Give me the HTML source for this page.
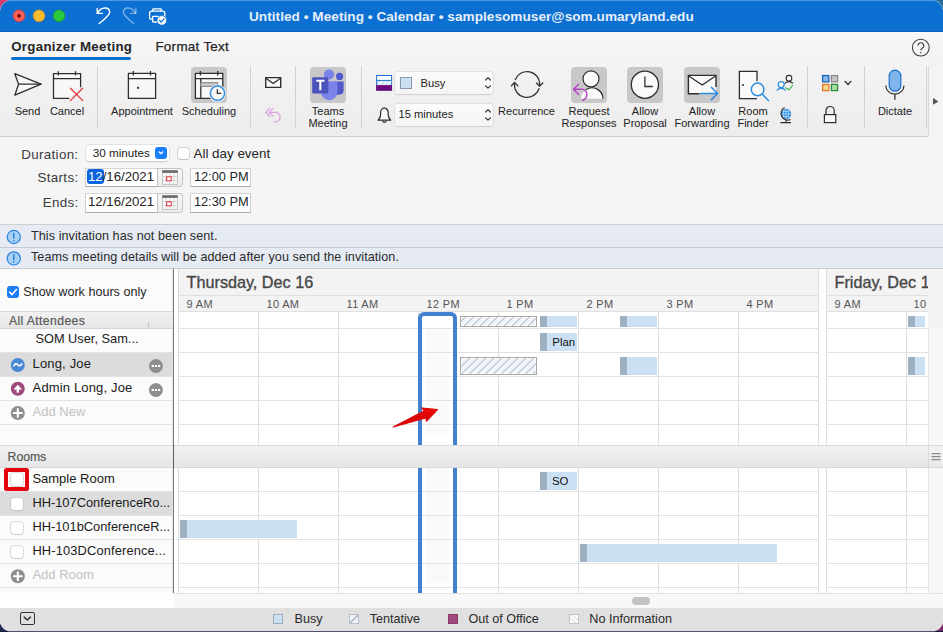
<!DOCTYPE html>
<html><head><meta charset="utf-8">
<style>
*{margin:0;padding:0;box-sizing:border-box}
html,body{width:943px;height:632px;overflow:hidden}
body{position:relative;font-family:"Liberation Sans",sans-serif;background:#1d2450;color:#222}
.a{position:absolute}
.t{position:absolute;white-space:nowrap;line-height:1}
#win{position:absolute;left:0;top:0;width:943px;height:631px;border-radius:12px 12px 11px 11px;box-shadow:0 0 0 0.5px rgba(255,255,255,0.5);overflow:hidden;background:#f5f5f5}
#title{left:0;top:0;width:943px;height:32px;z-index:1;background:#0c70d3;border-bottom:1px solid #0a5fb8}
.tl{position:absolute;width:12px;height:12px;border-radius:50%;top:10px}
/* toolbar */
#tb{left:0;top:31px;width:943px;height:106px;background:linear-gradient(#f7f7f7,#f2f2f2 40%,#ededed);border-bottom:1px solid #cdcdcd;box-shadow:inset 0 2px 0 #fafafa}
.sep{position:absolute;width:1px;background:#d2d2d2;top:35px;height:62px}
.lbl{position:absolute;font-size:11px;color:#222;text-align:center;line-height:12px;white-space:nowrap}
.hl{position:absolute;top:36px;width:36px;height:36px;border-radius:4px;background:#c8c8c8}
/* form */
.flab{position:absolute;font-size:13.4px;color:#3a3a3a;white-space:nowrap;line-height:1;letter-spacing:0.3px}
.field{position:absolute;background:#fff;border:1px solid #cdcdcd;border-bottom-color:#ababab;border-top-color:#d6d6d6}
/* info */
.info{position:absolute;left:0;width:943px;background:#e5eaf3;border-bottom:1px solid #c5cad3}
.ii{position:absolute;left:7px;width:14px;height:14px;border-radius:50%;background:#a9cdf1;border:1px solid #4a9be6}
.ii:after{content:"";position:absolute;left:5px;top:2px;width:2px;height:6px;background:#3c8fe0;box-shadow:0 8px 0 -0px #3c8fe0}
.itxt{position:absolute;left:31px;font-size:12.6px;color:#2a2a2a;white-space:nowrap;line-height:1;letter-spacing:0.07px}
/* left panel */
#lp{left:0;top:269px;width:173px;height:339px;background:#fafafa}
.row{position:absolute;left:0;width:173px;border-bottom:1px solid #e3e3e3}
.rtxt{position:absolute;font-size:13px;color:#1a1a1a;white-space:nowrap;line-height:1}
.band{position:absolute;background:linear-gradient(#f1f1f1,#e6e6e6);border-top:1px solid #d9d9d9;border-bottom:1px solid #d6d6d6}
/* grid */
.vl{position:absolute;width:1px;background:#dedede}
.hln{position:absolute;height:1px;background:#e2e2e2}
.hr{position:absolute;font-size:11px;color:#555;white-space:nowrap;line-height:1;letter-spacing:0.3px}
.busy{position:absolute;background:#cbe0f2;border-left:7px solid #9fb1c1}
.tent{position:absolute;border:1px solid #a3a3a3;background-color:#eef3f9;background-image:repeating-linear-gradient(135deg,transparent 0,transparent 5px,#b2b2b2 5px,#b2b2b2 5.9px)}
</style></head>
<body>
<div class="a" style="left:0;top:0;width:20px;height:20px;background:#d8386a"></div>
<div class="a" style="left:923px;top:0;width:20px;height:20px;background:#2a6c98"></div>
<div class="a" style="left:0;top:612px;width:943px;height:20px;background:#1f2a55"></div>
<div class="a" style="left:900px;top:612px;width:43px;height:20px;background:#7a2a6c"></div>
<div class="a" style="left:0;top:631px;width:943px;height:1px;background:#141a38"></div>
<div id="win">
<!-- TITLE BAR -->
<div id="title" class="a">
  <div class="a" style="left:0;top:0;width:943px;height:1px;background:#4d97e3"></div>
  <svg class="a" style="left:0;top:0" width="80" height="31">
    <circle cx="19" cy="15.8" r="5.9" fill="#fe5f57" stroke="#c9403b" stroke-width="0.8"/>
    <circle cx="19" cy="15.8" r="1.9" fill="#6e0c08"/>
    <circle cx="39" cy="15.8" r="5.9" fill="#febc2e" stroke="#c99322" stroke-width="0.8"/>
    <circle cx="59" cy="15.8" r="5.9" fill="#2bc840" stroke="#1e9a2e" stroke-width="0.8"/>
  </svg>
  <svg class="a" style="left:0;top:0" width="943" height="31">
    <g fill="none" stroke="#fff" stroke-width="1.4" stroke-linecap="round" stroke-linejoin="round">
      <path d="M97.2,8.4 V13.4 H102.4"/>
      <path d="M97.6,13.2 C100.5,6.5 110.5,6.2 109.6,12.8 C109.2,15.5 104,19.5 99.2,23.5"/>
    </g>
    <g fill="none" stroke="#fff" stroke-opacity="0.45" stroke-width="1.4" stroke-linecap="round" stroke-linejoin="round">
      <path d="M135.8,8.4 V13.4 H130.6"/>
      <path d="M135.4,13.2 C132.5,6.5 122.5,6.2 123.4,12.8 C123.8,15.5 129,19.5 133.8,23.5"/>
    </g>
    <g fill="none" stroke="#fff" stroke-width="1.3" stroke-linejoin="round">
      <path d="M152.8,11.2 V9.4 Q152.8,8.8 153.4,8.8 H160.6 Q161.2,8.8 161.2,9.4 V11.2"/>
      <rect x="149.6" y="11.2" width="15.2" height="8" rx="2"/>
      <rect x="152.6" y="16.4" width="6" height="5.6" rx="0.8" fill="#0c70d3"/>
    </g>
    <circle cx="161.8" cy="20.4" r="4.8" fill="#fff" stroke="#0c70d3" stroke-width="0.8"/>
    <path d="M159.6,20.4 L161.2,22 L164,18.8" fill="none" stroke="#0c70d3" stroke-width="1.2" stroke-linecap="round" stroke-linejoin="round"/>
  </svg>
  <div class="t" style="left:249px;top:9.8px;font-size:13.6px;font-weight:bold;color:#e6eef9;letter-spacing:0.04px">Untitled • Meeting • Calendar • samplesomuser@som.umaryland.edu</div>
</div>

<!-- TOOLBAR -->
<!--TBSVG-->
<div id="tb" class="a">
  <div class="t" style="left:11.2px;top:9.3px;font-size:13.3px;font-weight:bold;color:#262626;letter-spacing:0.3px">Organizer Meeting</div>
  <div class="a" style="left:11px;top:26px;width:120px;height:3px;border-radius:2px;background:#0f6cd0"></div>
  <div class="t" style="left:155.4px;top:8.9px;font-size:13.4px;color:#262626;letter-spacing:0.3px;-webkit-text-stroke:0.25px #262626">Format Text</div>
  <div class="sep" style="left:97px"></div>
  <div class="sep" style="left:250px"></div>
  <div class="sep" style="left:295px"></div>
  <div class="sep" style="left:361px"></div>
  <div class="sep" style="left:807px"></div>
  <div class="sep" style="left:864px"></div>
  <div class="sep" style="left:926px"></div>
  <div class="a" style="left:929px;top:35px;width:14px;height:71px;background:#f4f4f4"></div><div class="a" style="left:928px;top:35px;width:1px;height:71px;background:#d8d8d8"></div>
  <div class="hl" style="left:191px"></div>
  <div class="hl" style="left:310px"></div>
  <div class="hl" style="left:571px"></div>
  <div class="hl" style="left:627px"></div>
  <div class="hl" style="left:684px"></div>
  <div class="lbl" style="left:27.5px;top:74px;transform:translateX(-50%)">Send</div>
  <div class="lbl" style="left:67px;top:74px;transform:translateX(-50%)">Cancel</div>
  <div class="lbl" style="left:142px;top:74px;transform:translateX(-50%)">Appointment</div>
  <div class="lbl" style="left:209px;top:74px;transform:translateX(-50%)">Scheduling</div>
  <div class="lbl" style="left:328px;top:74px;transform:translateX(-50%)">Teams<br>Meeting</div>
  <div class="lbl" style="left:526.5px;top:74px;transform:translateX(-50%)">Recurrence</div>
  <div class="lbl" style="left:589px;top:74px;transform:translateX(-50%)">Request<br>Responses</div>
  <div class="lbl" style="left:645px;top:74px;transform:translateX(-50%)">Allow<br>Proposal</div>
  <div class="lbl" style="left:702px;top:74px;transform:translateX(-50%)">Allow<br>Forwarding</div>
  <div class="lbl" style="left:753px;top:74px;transform:translateX(-50%)">Room<br>Finder</div>
  <div class="lbl" style="left:895px;top:74px;transform:translateX(-50%)">Dictate</div>
  <!-- dropdowns -->
  <div class="a" style="left:395px;top:41px;width:98px;height:22px;border-radius:2.5px;background:linear-gradient(#fbfbfb,#f4f4f4);box-shadow:0 0 0 0.5px #d0d0d0,0 1px 1px rgba(0,0,0,0.12)"></div>
  <div class="a" style="left:400px;top:46px;width:12px;height:12px;background:#cde0f3;border:1px solid #8a9aaa"></div>
  <div class="t" style="left:420.5px;top:46.6px;font-size:11.2px;color:#222">Busy</div>
  <div class="a" style="left:395px;top:73px;width:98px;height:22px;border-radius:2.5px;background:linear-gradient(#fbfbfb,#f4f4f4);box-shadow:0 0 0 0.5px #d0d0d0,0 1px 1px rgba(0,0,0,0.12)"></div>
  <div class="t" style="left:398.5px;top:78.4px;font-size:11.2px;color:#222">15 minutes</div>
  <div class="t" style="left:912px;top:10px;font-size:0"></div>
</div>
<svg class="a" style="left:0;top:0" width="943" height="136">
 <g fill="none" stroke="#2e2e2e" stroke-width="1.3" stroke-linejoin="round" stroke-linecap="round">
  <!-- send -->
  <path d="M14.8,73.7 L41,84.2 L14.8,95.2 L18.6,84.2 Z" fill="#f8f8f8"/>
  <path d="M18.6,84.2 H41"/>
  <!-- cancel calendar -->
  <path d="M69.4,98.4 H53.5 V73.6 H80.6 V87.2" fill="#f8f8f8" stroke-linecap="butt"/>
  <path d="M53.5,78.6 H80.6 M58.3,71.2 V75.6 M75.5,71.2 V75.6" stroke-linecap="butt"/>
  <!-- appointment -->
  <rect x="128.4" y="73.4" width="27.2" height="25" fill="#f8f8f8"/>
  <path d="M128.4,78.6 H155.6 M133.4,71 V75.6 M150.5,71 V75.6" stroke-linecap="butt"/>
  <!-- scheduling -->
  <rect x="195.4" y="73.4" width="27.4" height="25" fill="#f8f8f8"/>
  <path d="M195.4,78.6 H222.8 M200.4,71 V75.6 M217.7,71 V75.6 M200.8,78.6 V98.4" stroke-linecap="butt"/>
  <!-- envelope small -->
  <rect x="265.7" y="77.6" width="15" height="9.8" stroke-width="1.4" fill="#fafafa"/>
  <path d="M266,78.2 L273.2,83.6 L280.4,78.2" stroke-width="1.3"/>
 </g>
 <rect x="137.1" y="86.8" width="2" height="2" fill="#2e2e2e"/>
 <path d="M70.4,88.2 L82.7,100.6 M82.7,88.2 L70.4,100.6" stroke="#e8343c" stroke-width="1.3" stroke-linecap="round"/>
 <rect x="200.9" y="82.6" width="16.8" height="3.8" fill="#c9c9c9" stroke="#8c8c8c" stroke-width="1.1"/>
 <circle cx="217.5" cy="93.2" r="8.8" fill="#ececec"/>
 <circle cx="217.5" cy="93.2" r="7.1" fill="#fafafa" stroke="#2f8ce0" stroke-width="1.5"/>
 <path d="M217.3,89 V93.4 H221.2" fill="none" stroke="#2e2e2e" stroke-width="1.2"/>
 <!-- reply all pink -->
 <g fill="none" stroke="#dca2e2" stroke-width="1.3" stroke-linecap="round" stroke-linejoin="round">
  <path d="M269.5,108.4 L265.6,112.4 L269.5,116.2"/>
  <path d="M273,108.4 L269,112.4 L273,116.2"/>
  <path d="M269.5,112.4 H275 A4.6,4.6 0 0 1 275.8,121.8 L274.6,122"/>
 </g>
 <!-- teams -->
 <circle cx="329" cy="74.4" r="5.2" fill="#7b83eb"/>
 <circle cx="339.6" cy="76.4" r="3.6" fill="#5059c9"/>
 <path d="M334,81.4 H343.6 V90.6 A4,4 0 0 1 339.6,94.6 A4,4 0 0 1 334,90.6 Z" fill="#5059c9"/>
 <path d="M321,81.2 H337.4 V92 A8.2,8.2 0 0 1 321,92 Z" fill="#7b83eb"/>
 <rect x="312.2" y="77.2" width="16.2" height="16.2" rx="1.2" fill="#4b53bc"/>
 <path d="M316.2,80.8 H324.4 M320.3,80.8 V90.2" stroke="#fff" stroke-width="2.1"/>
 <!-- show-as icon -->
 <rect x="376.6" y="75.5" width="15" height="14.6" fill="#fff" stroke="#1e6fc8" stroke-width="1"/>
 <rect x="377.1" y="80.6" width="14" height="4.6" fill="#cfe3f7"/>
 <path d="M379,85 L382,80.8 M383.5,85 L386.5,80.8 M388,85 L391,80.8" stroke="#fff" stroke-width="1.2"/>
 <path d="M376.6,80.4 H391.6" stroke="#1e6fc8" stroke-width="1"/>
 <rect x="376.2" y="85.1" width="15.8" height="5.6" fill="#6d0a7c"/>
 <!-- bell -->
 <path d="M378,120.2 Q380.6,118.4 380.6,114 V112.6 A3.8,4.4 0 0 1 388.2,112.6 V114 Q388.2,118.4 390.8,120.2 Z" fill="#fafafa" stroke="#2e2e2e" stroke-width="1.2" stroke-linejoin="round"/>
 <path d="M382.6,120.6 A1.8,1.8 0 0 0 386.2,120.6" fill="none" stroke="#2e2e2e" stroke-width="1.2"/>
 <!-- up/down arrows -->
 <g fill="none" stroke="#333" stroke-width="1.2" stroke-linecap="round" stroke-linejoin="round">
  <path d="M485.6,80 L488,77.6 L490.4,80 M485.6,85.8 L488,88.2 L490.4,85.8"/>
  <path d="M485.6,112 L488,109.6 L490.4,112 M485.6,117.8 L488,120.2 L490.4,117.8"/>
 </g>
 <!-- recurrence -->
 <g fill="none" stroke="#333" stroke-width="1.3" stroke-linecap="round" stroke-linejoin="round">
  <path d="M515.3,79.6 A12.6,12.6 0 0 1 539.6,85.2"/>
  <path d="M539,88.6 A12.6,12.6 0 0 1 514.5,83.2"/>
  <path d="M511.4,85.8 L514.5,82.4 L517.8,85.8"/>
  <path d="M536.4,83 L539.6,86.2 L542.8,83"/>
 </g>
 <!-- request responses -->
 <circle cx="591" cy="78.8" r="8" fill="#fafafa" stroke="#2e2e2e" stroke-width="1.2"/>
 <path d="M581,98.8 A11,11 0 0 1 603,98.8 Z" fill="#fafafa"/>
 <path d="M585.8,89.8 A11,11 0 0 1 603,98.8" fill="none" stroke="#2e2e2e" stroke-width="1.2"/>
 <g fill="none" stroke="#b43ec4" stroke-width="1.4" stroke-linecap="round" stroke-linejoin="round">
  <path d="M578.6,84.2 L573.6,89.2 L578.6,94.4"/>
  <path d="M573.8,89.2 H580.4 A5.4,5.4 0 0 1 582.4,100.2"/>
 </g>
 <!-- allow proposal clock -->
 <circle cx="644.9" cy="84.7" r="13.6" fill="#fafafa" stroke="#2e2e2e" stroke-width="1.3"/>
 <path d="M644.9,76.4 V86.5 H652.8" fill="none" stroke="#2e2e2e" stroke-width="1.3"/>
 <!-- allow forwarding -->
 <rect x="688.4" y="75.4" width="27.6" height="18.4" fill="#fafafa"/>
 <path d="M699.6,93.8 H688.4 V75.4 H716 V87" fill="none" stroke="#2e2e2e" stroke-width="1.4"/>
 <path d="M688.8,76 L702.2,85 L715.6,76" fill="none" stroke="#2e2e2e" stroke-width="1.3"/>
 <g fill="none" stroke="#2f8ce0" stroke-width="1.5" stroke-linecap="round" stroke-linejoin="round">
  <path d="M700.4,93.5 H717.6 M711.4,87.4 L717.6,93.5 L711.4,99.6"/>
 </g>
 <!-- room finder -->
 <path d="M757,81.2 V71.4 H739.4 V98.6 H757" fill="#fafafa" stroke="#2e2e2e" stroke-width="1.3"/>
 <circle cx="743" cy="85" r="1" fill="#2e2e2e"/>
 <circle cx="757.6" cy="89.4" r="6.3" fill="#fafafa" stroke="#2f8ce0" stroke-width="1.5"/>
 <path d="M762.2,94 L768.4,100.6" stroke="#2f8ce0" stroke-width="1.5" stroke-linecap="round"/>
 <!-- people check -->
 <circle cx="789" cy="78.2" r="2.8" fill="#fafafa" stroke="#2e2e2e" stroke-width="1.1"/>
 <path d="M784.6,83.8 A4.8,3.8 0 0 1 793,83.4" fill="none" stroke="#2e2e2e" stroke-width="1.1"/>
 <circle cx="781.2" cy="84.6" r="3" fill="#fafafa" stroke="#2f8ce0" stroke-width="1.2"/>
 <path d="M776.8,90.6 A5,4.2 0 0 1 785.6,90.6" fill="none" stroke="#2f8ce0" stroke-width="1.2"/>
 <path d="M785.6,87.8 L788.8,89.8 L792.6,85.4" fill="none" stroke="#3cb44b" stroke-width="1.2" stroke-linecap="round" stroke-linejoin="round"/>
 <!-- globe -->
 <circle cx="786" cy="114" r="5.2" fill="#2f8ce0"/>
 <path d="M781.2,114 H790.8 M786,109 V119 M782.4,111.4 H789.6 M782.4,116.6 H789.6 M784,109.6 Q782.8,114 784,118.4 M788,109.6 Q789.2,114 788,118.4" stroke="#bfe0fb" stroke-width="0.7" fill="none"/>
 <path d="M784.6,107.6 A6.6,6.6 0 0 0 790.6,119.4" fill="none" stroke="#2e2e2e" stroke-width="1.1"/>
 <path d="M786,119.8 V122.4 M780.4,122.6 H791" stroke="#2e2e2e" stroke-width="1.1"/>
 <!-- colour grid -->
 <rect x="822.6" y="75.6" width="6.2" height="6.2" fill="#8cbbea" stroke="#1464c2" stroke-width="1.3"/>
 <rect x="831.4" y="75.6" width="6.2" height="6.2" fill="#c6c6c6" stroke="#8a8a8a" stroke-width="1.3"/>
 <rect x="822.6" y="84.4" width="6.2" height="6.2" fill="#f7d98c" stroke="#e8782a" stroke-width="1.3"/>
 <rect x="831.4" y="84.4" width="6.2" height="6.2" fill="#a8dca6" stroke="#2c8c3c" stroke-width="1.3"/>
 <path d="M845.2,81.4 L848,84.6 L850.8,81.4" fill="none" stroke="#2e2e2e" stroke-width="1.4" stroke-linecap="round" stroke-linejoin="round"/>
 <!-- lock -->
 <path d="M826,114.6 V110.6 A4.1,4.1 0 0 1 834.2,110.6 V114.6" fill="none" stroke="#2e2e2e" stroke-width="1.2"/>
 <rect x="824.4" y="114.6" width="11.4" height="8" fill="#fafafa" stroke="#2e2e2e" stroke-width="1.2"/>
 <!-- help -->
 <circle cx="920.8" cy="47.6" r="8.4" fill="none" stroke="#3a3a3a" stroke-width="1.1"/>
 <path d="M918,45.6 A2.9,2.9 0 1 1 922.2,48.2 Q920.8,49 920.8,50.6" fill="none" stroke="#3a3a3a" stroke-width="1.1"/>
 <circle cx="920.8" cy="52.8" r="0.7" fill="#3a3a3a"/>
 <!-- mic -->
 <path d="M885.8,85.4 A9.1,8.8 0 0 0 904,85.4" fill="none" stroke="#2e2e2e" stroke-width="1.2"/>
 <path d="M894.9,94.2 V99.8" stroke="#2e2e2e" stroke-width="1.3"/>
 <rect x="889.2" y="70.2" width="11.6" height="21" rx="5.8" fill="#7fb5ea" stroke="#1a6fcf" stroke-width="1.2"/>
 <!-- play -->
 <path d="M933,98 L938.4,101.4 L933,104.8 Z" fill="#555"/>
</svg>

<!-- FORM -->
<div class="flab" style="right:864.6px;top:148px">Duration:</div>
<div class="flab" style="right:864.6px;top:171px">Starts:</div>
<div class="flab" style="right:864.6px;top:196px">Ends:</div>
<div class="a" style="left:86px;top:145px;width:83px;height:16px;border-radius:4px;background:#fff;box-shadow:0 0 0 0.5px #cfcfcf,0 1px 1.5px rgba(0,0,0,0.18)"></div>
<div class="t" style="left:92.7px;top:146.9px;font-size:11.7px;color:#222">30 minutes</div>
<div class="a" style="left:155.2px;top:146.8px;width:12px;height:12px;border-radius:3px;background:#1b7ffa"></div>
<svg class="a" style="left:155.2px;top:146.8px" width="12" height="12"><path d="M4.2,5 L6,6.8 L7.8,5" fill="none" stroke="#fff" stroke-width="1.3" stroke-linecap="round" stroke-linejoin="round"/></svg>
<div class="a" style="left:177.6px;top:147.5px;width:11px;height:11px;border-radius:2.5px;background:#fff;box-shadow:0 0 0 0.5px #b5b5b5,0 0.5px 1px rgba(0,0,0,0.15)"></div>
<div class="flab" style="left:193.5px;top:146.7px;color:#262626;letter-spacing:0">All day event</div>
<!-- start date -->
<div class="field" style="left:85.3px;top:168.3px;width:73px;height:19px"></div>
<div class="a" style="left:87px;top:169.2px;width:17px;height:15px;border-radius:3px;background:#0b63de"></div>
<div class="t" style="left:88px;top:170px;font-size:13.2px;color:#262626"><span style="color:#fff">12</span>/16/2021</div>
<div class="a" style="left:157.4px;top:168.3px;width:25.6px;height:19px;border:1px solid #c4c4c4;border-radius:0 3px 3px 0;background:linear-gradient(#f7f7f7,#ececec)"></div>
<div class="field" style="left:190.3px;top:168.3px;width:60.4px;height:19px"></div>
<div class="t" style="left:193.9px;top:171.3px;font-size:12.8px;color:#262626">12:00 PM</div>
<!-- end date -->
<div class="field" style="left:85.3px;top:193.1px;width:73px;height:19.6px"></div>
<div class="t" style="left:88px;top:195px;font-size:13.2px;color:#262626">12/16/2021</div>
<div class="a" style="left:157.4px;top:193.1px;width:25.6px;height:19.6px;border:1px solid #c4c4c4;border-radius:0 3px 3px 0;background:linear-gradient(#f7f7f7,#ececec)"></div>
<div class="field" style="left:190.3px;top:193.1px;width:60.4px;height:19.6px"></div>
<div class="t" style="left:193.9px;top:196.3px;font-size:12.8px;color:#262626">12:30 PM</div>
<svg class="a" style="left:0;top:0" width="200" height="220">
 <g>
  <rect x="162.5" y="170.5" width="15" height="14" fill="#fafafa" stroke="#b8b8b8" stroke-width="0.8"/>
  <rect x="162.3" y="170.3" width="15.4" height="2.6" fill="#6a6a6a"/>
  <path d="M162.5,176.5 H177.5 M162.5,180.5 H177.5 M166.2,173 V184.5 M170,173 V184.5 M173.8,173 V184.5" stroke="#c9c9c9" stroke-width="0.7"/>
  <rect x="166.6" y="176.8" width="4.6" height="4" fill="#fff" stroke="#e0303a" stroke-width="1"/>
 </g>
 <g>
  <rect x="162.5" y="195.5" width="15" height="14" fill="#fafafa" stroke="#b8b8b8" stroke-width="0.8"/>
  <rect x="162.3" y="195.3" width="15.4" height="2.6" fill="#6a6a6a"/>
  <path d="M162.5,201.5 H177.5 M162.5,205.5 H177.5 M166.2,198 V209.5 M170,198 V209.5 M173.8,198 V209.5" stroke="#c9c9c9" stroke-width="0.7"/>
  <rect x="166.6" y="201.8" width="4.6" height="4" fill="#fff" stroke="#e0303a" stroke-width="1"/>
 </g>
</svg>
<div class="a" style="left:0;top:224px;width:943px;height:1px;background:#cfcfcf"></div>
<!-- INFO BARS -->
<div class="info" style="top:225px;height:23px"></div>
<div class="info" style="top:248px;height:21px"></div>
<svg class="a" style="left:0;top:225px" width="30" height="44">
 <circle cx="13.8" cy="12" r="6.6" fill="#a9cff3" stroke="#2a86e2" stroke-width="1.2"/>
 <path d="M13.8,8.4 V13" stroke="#2f86dc" stroke-width="1.6" stroke-linecap="round"/>
 <circle cx="13.8" cy="15.6" r="0.9" fill="#3d8fe0"/>
 <circle cx="13.8" cy="33.4" r="6.6" fill="#a9cff3" stroke="#2a86e2" stroke-width="1.2"/>
 <path d="M13.8,29.8 V34.4" stroke="#2f86dc" stroke-width="1.6" stroke-linecap="round"/>
 <circle cx="13.8" cy="37" r="0.9" fill="#3d8fe0"/>
</svg>
<div class="itxt" style="top:230.4px">This invitation has not been sent.</div>
<div class="itxt" style="top:251.4px">Teams meeting details will be added after you send the invitation.</div>

<!-- LEFT PANEL -->
<div class="a" style="left:0;top:269px;width:173px;height:324px;background:#fbfbfb"></div>
<div class="a" style="left:0;top:593px;width:174px;height:15px;background:#fff"></div>
<div class="a" style="left:172px;top:269px;width:1px;height:324px;background:#e6e6e6"></div>
<div class="a" style="left:173px;top:269px;width:1px;height:324px;background:#7a7a7a"></div>
<div class="a" style="left:174px;top:269px;width:4px;height:324px;background:#fff"></div>
<div class="a" style="left:7px;top:286.4px;width:12px;height:12px;border-radius:3px;background:#1b7cf4"></div>
<svg class="a" style="left:7px;top:286.4px" width="12" height="12"><path d="M2.8,6.2 L5,8.6 L9.4,3.4" fill="none" stroke="#fff" stroke-width="1.6" stroke-linecap="round" stroke-linejoin="round"/></svg>
<div class="t" style="left:23.3px;top:285.8px;font-size:12.6px;color:#262626">Show work hours only</div>
<!-- grid base -->
<div class="a" style="left:178px;top:269px;width:1px;height:175px;background:#d9d9d9"></div><div class="a" style="left:178px;top:468px;width:1px;height:125px;background:#d9d9d9"></div>
<div class="a" style="left:179px;top:269px;width:640px;height:42px;background:#f3f3f3"></div>
<div class="a" style="left:827px;top:269px;width:101px;height:42px;background:#f3f3f3"></div>
<div class="a" style="left:179px;top:311px;width:640px;height:282px;background:#fff"></div>
<div class="a" style="left:827px;top:311px;width:101px;height:282px;background:#fff"></div>
<div class="a" style="left:819px;top:269px;width:8px;height:324px;background:#fff"></div>
<div class="a" style="left:818px;top:269px;width:1px;height:324px;background:#dedede"></div>
<div class="a" style="left:826px;top:269px;width:1px;height:324px;background:#dedede"></div>
<div class="a" style="left:179px;top:295px;width:639px;height:1px;background:#e0e0e0"></div>
<div class="a" style="left:827px;top:295px;width:101px;height:1px;background:#e0e0e0"></div>
<div class="a" style="left:179px;top:311px;width:639px;height:1px;background:#e0e0e0"></div>
<div class="a" style="left:827px;top:311px;width:101px;height:1px;background:#e0e0e0"></div>
<div class="t" style="left:186.6px;top:273.6px;font-size:16.2px;color:#474747;-webkit-text-stroke:0.35px #474747">Thursday, Dec 16</div>
<div class="a" style="left:827px;top:269px;width:101px;height:42px;overflow:hidden"><div class="t" style="left:7.6px;top:4.6px;font-size:16.2px;color:#474747;-webkit-text-stroke:0.35px #474747">Friday, Dec 17</div><div class="hr" style="left:7.6px;top:29.8px">9 AM</div><div class="hr" style="left:86.6px;top:29.8px">10 AM</div></div>
<div class="a" style="left:426px;top:329px;width:22.6px;height:106px;background:#f9f9f9"></div><div class="a" style="left:426px;top:468px;width:22.6px;height:115px;background:#f9f9f9"></div>
<div class="vl" style="left:258.0px;top:311px;height:134px"></div><div class="vl" style="left:258.0px;top:467px;height:126px"></div><div class="vl" style="left:338.0px;top:311px;height:134px"></div><div class="vl" style="left:338.0px;top:467px;height:126px"></div><div class="vl" style="left:418.0px;top:311px;height:134px"></div><div class="vl" style="left:418.0px;top:467px;height:126px"></div><div class="vl" style="left:498.0px;top:311px;height:134px"></div><div class="vl" style="left:498.0px;top:467px;height:126px"></div><div class="vl" style="left:578.0px;top:311px;height:134px"></div><div class="vl" style="left:578.0px;top:467px;height:126px"></div><div class="vl" style="left:658.0px;top:311px;height:134px"></div><div class="vl" style="left:658.0px;top:467px;height:126px"></div><div class="vl" style="left:738.0px;top:311px;height:134px"></div><div class="vl" style="left:738.0px;top:467px;height:126px"></div><div class="vl" style="left:906px;top:311px;height:134px"></div><div class="vl" style="left:906px;top:467px;height:126px"></div>
<div class="hln" style="left:179px;top:328px;width:640px"></div><div class="hln" style="left:827px;top:328px;width:101px"></div><div class="hln" style="left:179px;top:352px;width:640px"></div><div class="hln" style="left:827px;top:352px;width:101px"></div><div class="hln" style="left:179px;top:376px;width:640px"></div><div class="hln" style="left:827px;top:376px;width:101px"></div><div class="hln" style="left:179px;top:400px;width:640px"></div><div class="hln" style="left:827px;top:400px;width:101px"></div><div class="hln" style="left:179px;top:424px;width:640px"></div><div class="hln" style="left:827px;top:424px;width:101px"></div><div class="hln" style="left:179px;top:491px;width:640px"></div><div class="hln" style="left:827px;top:491px;width:101px"></div><div class="hln" style="left:179px;top:515px;width:640px"></div><div class="hln" style="left:827px;top:515px;width:101px"></div><div class="hln" style="left:179px;top:539px;width:640px"></div><div class="hln" style="left:827px;top:539px;width:101px"></div><div class="hln" style="left:179px;top:563px;width:640px"></div><div class="hln" style="left:827px;top:563px;width:101px"></div><div class="hln" style="left:179px;top:587px;width:640px"></div><div class="hln" style="left:827px;top:587px;width:101px"></div>
<div class="hr" style="left:186.6px;top:298.8px">9 AM</div><div class="hr" style="left:266.6px;top:298.8px">10 AM</div><div class="hr" style="left:346.6px;top:298.8px">11 AM</div><div class="hr" style="left:426.6px;top:298.8px">12 PM</div><div class="hr" style="left:506.6px;top:298.8px">1 PM</div><div class="hr" style="left:586.6px;top:298.8px">2 PM</div><div class="hr" style="left:666.6px;top:298.8px">3 PM</div><div class="hr" style="left:746.6px;top:298.8px">4 PM</div>

<!-- scroll track right -->
<div class="a" style="left:928px;top:269px;width:15px;height:339px;background:#f3f3f3"></div>
<div class="a" style="left:929px;top:329px;width:14px;height:264px;background:#f8f8f8"></div><div class="a" style="left:928px;top:329px;width:1px;height:264px;background:#e6e6e6"></div>
<!-- horizontal scroll track -->
<div class="a" style="left:174px;top:593px;width:769px;height:15px;background:#f6f6f6"></div>
<div class="a" style="left:632px;top:597.2px;width:18px;height:7.6px;border-radius:4px;background:#c2c2c2"></div>
<!-- attendees band -->
<div class="band" style="left:0;top:311px;width:173px;height:18px"></div>
<div class="t" style="left:8.9px;top:315.4px;font-size:12.2px;color:#585858;letter-spacing:0.4px;-webkit-text-stroke:0.2px #585858">All Attendees</div>
<div class="a" style="left:148px;top:322px;width:1px;height:6px;background:#c8c8c8"></div>
<div class="a" style="left:0;top:352px;width:172px;height:24px;background:#dcdcdc"></div>
<div class="a" style="left:0;top:352px;width:172px;height:1px;background:#e3e3e3"></div>
<div class="a" style="left:0;top:376px;width:172px;height:1px;background:#e3e3e3"></div>
<div class="a" style="left:0;top:400px;width:172px;height:1px;background:#e3e3e3"></div>
<div class="a" style="left:0;top:424px;width:172px;height:1px;background:#e3e3e3"></div>
<div class="rtxt" style="left:35.4px;top:332.8px;font-size:12.8px">SOM User, Sam...</div>
<div class="rtxt" style="left:32.6px;top:357.3px;letter-spacing:0.15px">Long, Joe</div>
<div class="rtxt" style="left:32.6px;top:381px;letter-spacing:0.15px">Admin Long, Joe</div>
<div class="rtxt" style="left:32.6px;top:405.2px;color:#c2c2c2">Add New</div>
<!-- rooms band -->
<div class="band" style="left:0;top:445px;width:943px;height:23px;z-index:3"></div>
<div class="a" style="left:173px;top:445px;width:1px;height:23px;background:#5a5a5a;z-index:3"></div>
<div class="t" style="left:7.6px;top:450.6px;font-size:12.2px;color:#585858;letter-spacing:0px;-webkit-text-stroke:0.2px #585858;z-index:3">Rooms</div>
<div class="a" style="left:0;top:491px;width:172px;height:24px;background:#dcdcdc"></div>
<div class="a" style="left:0;top:491px;width:172px;height:1px;background:#e3e3e3"></div>
<div class="a" style="left:0;top:515px;width:172px;height:1px;background:#e3e3e3"></div>
<div class="a" style="left:0;top:539px;width:172px;height:1px;background:#e3e3e3"></div>
<div class="a" style="left:0;top:563px;width:172px;height:1px;background:#e3e3e3"></div>
<div class="a" style="left:0;top:587px;width:172px;height:1px;background:#e3e3e3"></div>
<div class="rtxt" style="left:32.4px;top:472.2px">Sample Room</div>
<div class="rtxt" style="left:32.4px;top:496.8px;font-size:12.85px">HH-107ConferenceRo...</div>
<div class="rtxt" style="left:32.4px;top:520.6px;font-size:12.85px">HH-101bConferenceR...</div>
<div class="rtxt" style="left:32.4px;top:544.7px;font-size:12.85px;letter-spacing:0.15px">HH-103DConference...</div>
<div class="rtxt" style="left:32.4px;top:568px;color:#c2c2c2">Add Room</div>

<!-- avatars & checkboxes -->
<svg class="a" style="left:0;top:340px" width="174" height="250">
 <circle cx="17.8" cy="25" r="7" fill="#4a88d6"/>
 <path d="M13.8,25.8 Q15.8,22.4 17.8,24.8 Q19.8,27.2 21.8,23.8" fill="none" stroke="#fff" stroke-width="1.6" stroke-linecap="round"/>
 <circle cx="17.8" cy="48.8" r="7" fill="#9e4a7c"/>
 <path d="M14.3,49.2 L17.8,45 L21.3,49.2 Z" fill="#fff" stroke="#fff" stroke-width="0.8" stroke-linejoin="round"/><rect x="16.6" y="48.6" width="2.4" height="4" fill="#fff"/>
 <circle cx="17.8" cy="73" r="7" fill="#8e8e8e"/>
 <path d="M17.8,69 V77 M13.8,73 H21.8" stroke="#fff" stroke-width="2.1" stroke-linecap="round"/>
 <circle cx="155.9" cy="26" r="6.6" fill="#8e8e8e" stroke="#808080" stroke-width="0.6"/>
 <path d="M151.6,24.9 h2.2 v2.2 h-2.2 Z M154.8,24.9 h2.2 v2.2 h-2.2 Z M158,24.9 h2.2 v2.2 h-2.2 Z" fill="#fff"/>
 <circle cx="155.9" cy="50" r="6.6" fill="#8e8e8e" stroke="#808080" stroke-width="0.6"/>
 <path d="M151.6,48.9 h2.2 v2.2 h-2.2 Z M154.8,48.9 h2.2 v2.2 h-2.2 Z M158,48.9 h2.2 v2.2 h-2.2 Z" fill="#fff"/>
 <circle cx="17.8" cy="236.2" r="7" fill="#8e8e8e"/>
 <path d="M17.8,232.2 V240.2 M13.8,236.2 H21.8" stroke="#fff" stroke-width="2.1" stroke-linecap="round"/>
</svg>
<div class="a" style="left:4px;top:467.8px;width:24.8px;height:23.5px;border:4px solid #e3040c;border-radius:2.5px"></div>
<div class="a" style="left:10.6px;top:473px;width:12.8px;height:12.6px;border-radius:3px;background:#fff;box-shadow:0 0 0 0.6px #c4c4c4,0 0.5px 1px rgba(0,0,0,0.12)"></div>
<div class="a" style="left:10.6px;top:497.9px;width:12.8px;height:12.4px;border-radius:3px;background:#fff;box-shadow:0 0 0 0.6px #c4c4c4,0 0.5px 1px rgba(0,0,0,0.12)"></div>
<div class="a" style="left:10.6px;top:521.9px;width:12.8px;height:12.4px;border-radius:3px;background:#fff;box-shadow:0 0 0 0.6px #c4c4c4,0 0.5px 1px rgba(0,0,0,0.12)"></div>
<div class="a" style="left:10.6px;top:545.9px;width:12.8px;height:12.4px;border-radius:3px;background:#fff;box-shadow:0 0 0 0.6px #c4c4c4,0 0.5px 1px rgba(0,0,0,0.12)"></div>
<!-- busy bars -->
<svg class="a" style="left:0;top:0" width="943" height="632">
 <defs><clipPath id="tc1"><rect x="461" y="317" width="75" height="9"/></clipPath></defs>
 <rect x="461" y="317" width="75" height="9" fill="#fff"/>
 <rect x="462" y="318" width="73" height="7" fill="#edf3fa"/>
 <path d="M416.30,326 L425.30,317 M424.30,326 L433.30,317 M432.30,326 L441.30,317 M440.30,326 L449.30,317 M448.30,326 L457.30,317 M456.30,326 L465.30,317 M464.30,326 L473.30,317 M472.30,326 L481.30,317 M480.30,326 L489.30,317 M488.30,326 L497.30,317 M496.30,326 L505.30,317 M504.30,326 L513.30,317 M512.30,326 L521.30,317 M520.30,326 L529.30,317 M528.30,326 L537.30,317 M536.30,326 L545.30,317" stroke="#a9a9a9" stroke-width="1" clip-path="url(#tc1)"/>
 <rect x="460.5" y="316.5" width="76" height="10" fill="none" stroke="#a6a6a6" stroke-width="1"/>
</svg>
<svg class="a" style="left:0;top:0" width="943" height="632">
 <defs><clipPath id="tc2"><rect x="461" y="358" width="75" height="16"/></clipPath></defs>
 <rect x="461" y="358" width="75" height="16" fill="#fff"/>
 <rect x="462" y="359" width="73" height="14" fill="#edf3fa"/>
 <path d="M413.60,374 L429.60,358 M421.60,374 L437.60,358 M429.60,374 L445.60,358 M437.60,374 L453.60,358 M445.60,374 L461.60,358 M453.60,374 L469.60,358 M461.60,374 L477.60,358 M469.60,374 L485.60,358 M477.60,374 L493.60,358 M485.60,374 L501.60,358 M493.60,374 L509.60,358 M501.60,374 L517.60,358 M509.60,374 L525.60,358 M517.60,374 L533.60,358 M525.60,374 L541.60,358 M533.60,374 L549.60,358" stroke="#a9a9a9" stroke-width="1" clip-path="url(#tc2)"/>
 <rect x="460.5" y="357.5" width="76" height="17" fill="none" stroke="#a6a6a6" stroke-width="1"/>
</svg>
<div class="busy" style="left:540px;top:315.8px;width:37px;height:11.2px"></div>
<div class="busy" style="left:540px;top:332.8px;width:37px;height:18.2px"></div>
<div class="t" style="left:552.3px;top:336.9px;font-size:11.4px;color:#111">Plan</div>
<div class="busy" style="left:620px;top:315.8px;width:37px;height:11.2px"></div>
<div class="busy" style="left:620px;top:357px;width:37px;height:18px"></div>
<div class="busy" style="left:908px;top:315.8px;width:17px;height:11.2px"></div>
<div class="busy" style="left:908px;top:357px;width:17px;height:18px"></div>
<div class="busy" style="left:540px;top:471.8px;width:37px;height:18px"></div>
<div class="t" style="left:552px;top:475.9px;font-size:11.4px;color:#111">SO</div>
<div class="busy" style="left:180px;top:520px;width:117px;height:18px"></div>
<div class="busy" style="left:580px;top:544px;width:197px;height:18px"></div>
<!-- selection -->
<div class="a" style="left:418px;top:312px;width:39px;height:300px;border:4px solid #4381d0;border-radius:6px;z-index:2"></div>
<!-- cover below grid -->
<div class="a" style="left:174px;top:593px;width:769px;height:15px;background:#f8f8f8;border-top:1px solid #e2e2e2;z-index:3"></div>
<div class="a" style="left:632px;top:597.2px;width:18px;height:7.6px;border-radius:4px;background:#c2c2c2;z-index:3"></div>
<div class="a" style="left:0;top:593px;width:174px;height:15px;background:#fff;z-index:3"></div>
<!-- arrow -->
<svg class="a" style="left:380px;top:400px;z-index:4" width="70" height="35">
 <defs><linearGradient id="ag" x1="0" y1="0" x2="0" y2="1"><stop offset="0" stop-color="#f00a0a"/><stop offset="1" stop-color="#c80000"/></linearGradient></defs>
 <path d="M13.2,27 L44.6,10.9 L41.8,8 L57.4,9.5 L46.6,21 L45.8,17.8 Z" fill="url(#ag)" stroke="#e00404" stroke-width="1.2" stroke-linejoin="round"/>
</svg>
<div class="a" style="left:0;top:0;z-index:5">
<!-- rooms band icon -->
<div class="a" style="left:928px;top:445px;width:15px;height:23px;background:linear-gradient(#f3f3f3,#e9e9e9);border-top:1px solid #d9d9d9;border-bottom:1px solid #d6d6d6;border-left:1px solid #d9d9d9"></div>
<svg class="a" style="left:928px;top:445px" width="15" height="23"><path d="M3.5,8.6 H12.5 M3.5,11.6 H12.5 M3.5,14.6 H12.5" stroke="#8a8a8a" stroke-width="1.2"/></svg>
<!-- STATUS BAR -->
<div class="a" style="left:0;top:608px;width:943px;height:23px;background:#e0e0e0"></div>
<div class="a" style="left:20.4px;top:612px;width:14.6px;height:12.8px;border:1.3px solid #333;border-radius:2px"></div>
<svg class="a" style="left:20.4px;top:612px" width="15" height="13"><path d="M4.2,5.2 L7.3,8 L10.4,5.2" fill="none" stroke="#333" stroke-width="1.6" stroke-linecap="round" stroke-linejoin="round"/></svg>
<div class="a" style="left:273.2px;top:614.1px;width:9.6px;height:9.6px;background:#cde0f2;border:1px solid #9aaec0"></div>
<div class="t" style="left:294.5px;top:612.6px;font-size:12.6px;color:#2a2a2a">Busy</div>
<svg class="a" style="left:349px;top:614px" width="10" height="10"><rect x="0.5" y="0.5" width="9" height="9" fill="#eef5fb" stroke="#b7bec5"/><path d="M1.2,8.8 L8.8,1.2" stroke="#aab1b8" stroke-width="1.5"/></svg>
<div class="t" style="left:369.7px;top:612.6px;font-size:12.6px;color:#2a2a2a">Tentative</div>
<div class="a" style="left:447.8px;top:614.1px;width:10.5px;height:10px;background:#a14a7e;border:1px solid #8a3a68"></div>
<div class="t" style="left:468.4px;top:612.6px;font-size:12.6px;color:#2a2a2a">Out of Office</div>
<svg class="a" style="left:569px;top:614px" width="10" height="10"><rect x="0.5" y="0.5" width="9" height="9" fill="#fff" stroke="#c2c2c2"/><path d="M0.8,3.2 L6.8,9.2 M3.2,0.8 L9.2,6.8" stroke="#c6c6c6" stroke-width="0.9"/></svg>
<div class="t" style="left:589.3px;top:612.6px;font-size:12.6px;color:#2a2a2a">No Information</div>
</div>
</div>
</body></html>
